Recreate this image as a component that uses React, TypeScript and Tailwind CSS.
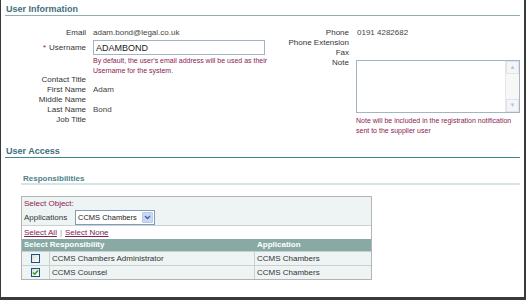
import React from 'react';

const labelCls = 'text-right whitespace-nowrap';

function Row({ label, value, children }: { label: string; value?: string; children?: React.ReactNode }) {
  return (
    <div className="flex h-[10px] items-center leading-[10px]">
      <div className={`w-[81px] ${labelCls}`}>{label}</div>
      <div className="ml-[7px] text-[#444]">{value ?? children}</div>
    </div>
  );
}

function RightRow({ label, value }: { label: string; value?: string }) {
  return (
    <div className="flex h-[10px] items-center leading-[10px]">
      <div className={`w-[80px] ${labelCls}`}>{label}</div>
      <div className="ml-[8px] text-[#444]">{value}</div>
    </div>
  );
}

function Checkbox({ checked }: { checked?: boolean }) {
  return (
    <div className="flex h-[9px] w-[9px] items-center justify-center border border-[#1c5180] bg-gradient-to-br from-[#dcdcd6] to-white">
      {checked && (
        <svg width="7" height="7" viewBox="0 0 7 7">
          <path d="M1 3.5 L2.8 5.3 L6 1.5" stroke="#21a121" strokeWidth="1.4" fill="none" />
        </svg>
      )}
    </div>
  );
}

export default function App() {
  const responsibilities = [
    { name: 'CCMS Chambers Administrator', app: 'CCMS Chambers', checked: false },
    { name: 'CCMS Counsel', app: 'CCMS Chambers', checked: true },
  ];

  return (
    <div className="h-[300px] w-[526px] overflow-hidden border-b-[3px] border-l border-r-2 border-[#3a3a3a] bg-white font-['Liberation_Sans',Arial,sans-serif] text-[8px] text-[#333]">
      <div className="pl-[4px] pr-[4px]">
        {/* User Information */}
        <div className="mt-[4px] h-[12px] border-b border-[#8fb0b0] pl-px text-[9px] font-bold leading-[11px] text-[#3f6e7c]">
          User Information
        </div>

        <div className="mt-[12px] flex">
          {/* left column */}
          <div className="w-[265px]">
            <Row label="Email" value="adam.bond@legal.co.uk" />
            <div className="flex h-[17px] items-center pt-[2px]">
              <div className={`w-[81px] ${labelCls}`}>
                <span className="mr-[3px] text-[#8b2252]">*</span>Username
              </div>
              <input
                className="ml-[7px] h-[15px] w-[172px] border border-[#a5b4c4] px-[2px] text-[9px] text-[#222] outline-none"
                defaultValue="ADAMBOND"
              />
            </div>
            <div className="ml-[88px] h-[20px] whitespace-nowrap pt-px text-[7px] leading-[10px] text-[#8b2252]">
              By default, the user's email address will be used as their
              <br />
              Username for the system.
            </div>
            <Row label="Contact Title" />
            <Row label="First Name" value="Adam" />
            <Row label="Middle Name" />
            <Row label="Last Name" value="Bond" />
            <Row label="Job Title" />
          </div>

          {/* right column */}
          <div className="w-[251px]">
            <RightRow label="Phone" value="0191 4282682" />
            <RightRow label="Phone Extension" />
            <RightRow label="Fax" />
            <div className="flex">
              <div className={`w-[80px] leading-[10px] ${labelCls}`}>Note</div>
              <div className="ml-[7px] mt-[2px]">
                <div className="flex h-[53px] w-[164px] border border-[#a5b4c4] bg-white">
                  <div className="flex-1" />
                  <div className="flex w-[14px] flex-col justify-between border-l border-[#e6e6e6] bg-[#f7f7f5]">
                    <div className="flex h-[13px] items-center justify-center border border-[#e0e4ea] bg-[#f3f5f9] text-[6px] text-[#c0c4cc]">▲</div>
                    <div className="flex h-[13px] items-center justify-center border border-[#e0e4ea] bg-[#f3f5f9] text-[6px] text-[#c0c4cc]">▼</div>
                  </div>
                </div>
                <div className="mt-[3px] whitespace-nowrap text-[7px] leading-[10px] text-[#8b2252]">
                  Note will be included in the registration notification
                  <br />
                  sent to the supplier user
                </div>
              </div>
            </div>
          </div>
        </div>

        {/* User Access */}
        <div className="mt-[10px] h-[12px] border-b border-[#3f8a86] pl-px text-[9px] font-bold leading-[11px] text-[#3f6e7c]">
          User Access
        </div>

        <div className="ml-[16px] mt-[17px] h-[10px] border-b-2 border-[#d7e4e4] pl-[2px] font-bold leading-[8px] text-[#4f7f88]">
          Responsibilities
        </div>

        {/* responsibilities table */}
        <div className="ml-[16px] mt-[11px] w-[351px] border border-[#b3b3b3] bg-[#eef3f3]">
          <div className="h-[29px] border-b border-[#c9d2d2] px-[2px]">
            <div className="h-[13px] pt-[2px] leading-[10px] text-[#8b2252]">Select Object:</div>
            <div className="flex h-[15px] items-center">
              <span className="w-[51px]">Applications</span>
              <div className="flex h-[15px] w-[80px] items-center border border-[#7f9db9] bg-white">
                <span className="flex-1 whitespace-nowrap pl-[2px] text-[7.5px] text-[#222]">CCMS Chambers</span>
                <div className="mr-px flex h-[11px] w-[11px] items-center justify-center rounded-[1px] border border-[#b6c9ef] bg-[#c6d7fa]">
                  <svg width="7" height="5" viewBox="0 0 7 5">
                    <path d="M1 1 L3.5 3.5 L6 1" stroke="#4d6185" strokeWidth="1.3" fill="none" />
                  </svg>
                </div>
              </div>
            </div>
          </div>
          <div className="flex h-[13px] items-center bg-white px-[2px] text-[#7d2455]">
            <span className="underline">Select All</span>
            <span className="mx-[3px] text-[#999]">|</span>
            <span className="underline">Select None</span>
          </div>
          <div className="flex h-[12px] items-center bg-[#88a9a4] font-bold text-white">
            <div className="w-[233px] pl-[2px]">Select Responsibility</div>
            <div className="pl-[2px]">Application</div>
          </div>
          {responsibilities.map((r) => (
            <div key={r.name} className="flex h-[14px] border-t border-[#c9d0d0]">
              <div className="flex w-[28px] items-center justify-center border-r border-[#c9d0d0]">
                <Checkbox checked={r.checked} />
              </div>
              <div className="flex w-[205px] items-center border-r border-[#c9d0d0] pl-[2px]">{r.name}</div>
              <div className="flex items-center pl-[2px]">{r.app}</div>
            </div>
          ))}
        </div>
      </div>
    </div>
  );
}
